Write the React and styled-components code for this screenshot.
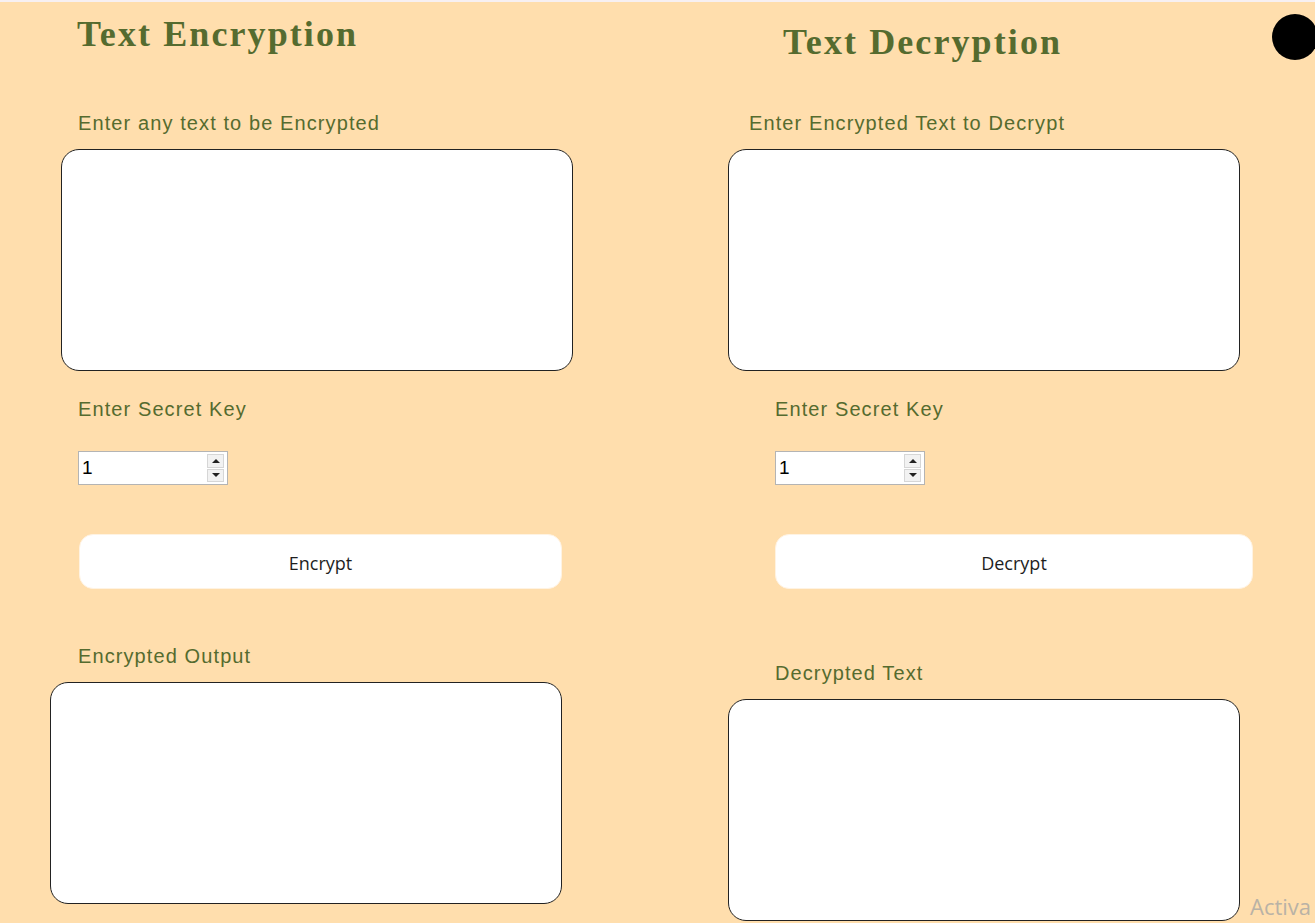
import React from "react";
import styled, { createGlobalStyle } from "styled-components";

const GlobalStyle = createGlobalStyle`
   html, body {
      margin: 0;
      padding: 0;
      height: 100%;
      overflow: hidden;
      background: #ffdead;
   }
   body {
      font-family: "Liberation Sans", Arial, sans-serif;
   }
`;

const Page = styled.div`
   position: relative;
   height: 923px;
   box-sizing: border-box;
   border-top: 2px solid #f7f0f2;
   display: grid;
   grid-template-columns: 678px 1fr;
`;

const Column = styled.div`
   display: flex;
   flex-direction: column;
   align-items: flex-start;
   padding-left: ${(p) => p.$left}px;
`;

const Heading = styled.h1`
   margin: ${(p) => p.$top}px 0 0 ${(p) => p.$indent}px;
   font-family: "Liberation Serif", "Times New Roman", serif;
   font-weight: bold;
   font-size: 36px;
   letter-spacing: 2.1px;
   line-height: 40px;
   color: #556b2f;
`;

const Label = styled.label`
   display: block;
   margin: ${(p) => p.$top}px 0 0 ${(p) => p.$indent || 0}px;
   font-size: 20px;
   letter-spacing: 1.1px;
   line-height: 24px;
   color: #556b2f;
`;

const TextBox = styled.textarea`
   display: block;
   margin: ${(p) => p.$top}px 0 0 ${(p) => p.$indent || 0}px;
   width: 512px;
   height: 222px;
   box-sizing: border-box;
   border: 1px solid #222;
   border-radius: 18px;
   background: #fff;
   resize: none;
   outline: none;
`;

const NumberBox = styled.div`
   margin: ${(p) => p.$top}px 0 0 ${(p) => p.$indent || 0}px;
   width: 150px;
   height: 34px;
   box-sizing: border-box;
   border: 1px solid #b4b4b4;
   background: #fff;
   display: flex;
   align-items: center;
   padding: 2px 3px 2px 2px;
`;

const NumberValue = styled.input`
   flex: 1;
   min-width: 0;
   border: none;
   outline: none;
   padding: 0 0 0 1px;
   font-family: "Liberation Sans", Arial, sans-serif;
   font-size: 19px;
   color: #000;
   background: transparent;
`;

const Spinner = styled.div`
   display: flex;
   flex-direction: column;
   gap: 1px;
   width: 17px;
   height: 28px;
`;

const SpinButton = styled.div`
   flex: 1;
   background: #f2f2f2;
   border: 1px solid #d6d6d6;
   display: flex;
   align-items: center;
   justify-content: center;
   &::after {
      content: "";
      border-left: 4px solid transparent;
      border-right: 4px solid transparent;
      ${(p) =>
         p.$down
            ? "border-top: 4px solid #222;"
            : "border-bottom: 4px solid #222;"}
   }
`;

const ActionButton = styled.button`
   margin: ${(p) => p.$top}px 0 0 ${(p) => p.$indent || 0}px;
   width: ${(p) => p.$width}px;
   height: 55px;
   padding-top: 4px;
   border: 1px solid #fff3e2;
   border-radius: 14px;
   background: #fff;
   font-family: "Open Sans", "Noto Sans", sans-serif;
   font-size: 18px;
   color: #1e1e1e;
   cursor: pointer;
`;

const ThemeDot = styled.div`
   position: absolute;
   top: 12px;
   left: 1272px;
   width: 46px;
   height: 46px;
   border-radius: 50%;
   background: #000;
`;

const Watermark = styled.div`
   position: absolute;
   left: 1250px;
   top: 889px;
   font-family: "Open Sans", "Noto Sans", sans-serif;
   font-size: 22px;
   color: #b9b2a6;
   white-space: nowrap;
   pointer-events: none;
`;

function KeyInput({ top, indent }) {
   return (
      <NumberBox $top={top} $indent={indent}>
         <NumberValue type="text" defaultValue="1" />
         <Spinner>
            <SpinButton />
            <SpinButton $down />
         </Spinner>
      </NumberBox>
   );
}

export default function App() {
   return (
      <>
         <GlobalStyle />
         <Page>
            <Column $left={50}>
               <Heading $top={12} $indent={27}>Text Encryption</Heading>
               <Label $top={57} $indent={28}>Enter any text to be Encrypted</Label>
               <TextBox $top={14} $indent={11} />
               <Label $top={26} $indent={28}>Enter Secret Key</Label>
               <KeyInput top={30} indent={28} />
               <ActionButton $top={49} $indent={29} $width={483}>Encrypt</ActionButton>
               <Label $top={55} $indent={28}>Encrypted Output</Label>
               <TextBox $top={14} />
            </Column>
            <Column $left={50}>
               <Heading $top={20} $indent={55}>Text Decryption</Heading>
               <Label $top={49} $indent={21}>Enter Encrypted Text to Decrypt</Label>
               <TextBox $top={14} />
               <Label $top={26} $indent={47}>Enter Secret Key</Label>
               <KeyInput top={30} indent={47} />
               <ActionButton $top={49} $indent={47} $width={478}>Decrypt</ActionButton>
               <Label $top={72} $indent={47}>Decrypted Text</Label>
               <TextBox $top={14} />
            </Column>
            <ThemeDot />
            <Watermark>Activa</Watermark>
         </Page>
      </>
   );
}
